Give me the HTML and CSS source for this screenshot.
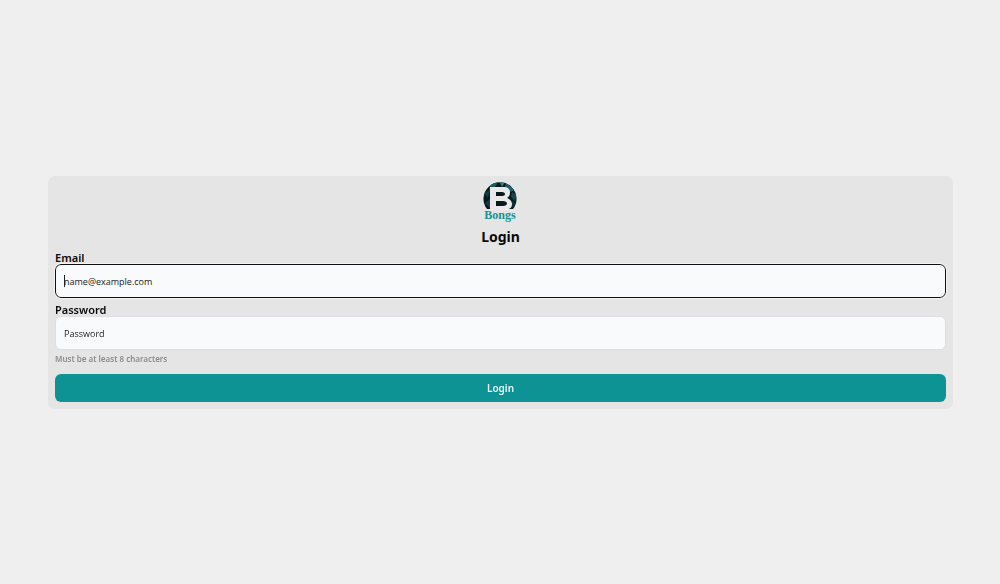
FILE: index.html
```html
<!DOCTYPE html>
<html lang="en">
<head>
<meta charset="utf-8">
<meta name="viewport" content="width=device-width, initial-scale=1">
<title>Login</title>
<link rel="stylesheet" href="styles.css">
</head>
<body class="page">
<main class="card">
  <svg class="logo" viewBox="0 0 34 42" role="img" aria-label="Bongs">
    <defs><clipPath id="disc"><path d="M4 28A16.500 16.500 0 1 1 30 28Z"/></clipPath></defs>
    <g clip-path="url(#disc)">
      <rect width="34" height="30" fill="#08191d"/>
      <path d="M8 3L15 0L13 5L6 9Z" fill="#175b5f"/>
      <path d="M16 0L22 1L19 6Z" fill="#327f80"/>
      <path d="M23 2L32 9L27 11L22 6Z" fill="#1d6468"/>
      <path d="M29 11L34 14L32 20L28 16Z" fill="#15474b"/>
      <path d="M1 12L7 9L5 17Z" fill="#103d42"/>
      <path d="M2 22L7 18L8 28Z" fill="#123e42"/>
      <path d="M29 20L33 22L27 29Z" fill="#0d3337"/>
    </g>
    <path fill="#e9e9e9" fill-rule="evenodd" d="M7 6H20C25 6 27 8 27 11.500C27 14 26 16 24 17C27 18 29 20 29 23C29 27 26 29 21 29H7ZM13 11V15H19C21 15 22 14 22 13C22 12 21 11 19 11ZM13 20V25H20C22.500 25 24 24 24 22.500C24 21 22.500 20 20 20Z"/>
    <text class="logo-name" x="17" y="38" text-anchor="middle">Bongs</text>
  </svg>
  <h1 class="title">Login</h1>
  <form class="form">
    <label class="label" for="email">Email</label>
    <input class="field" id="email" type="email" placeholder="name@example.com" autofocus>
    <label class="label label-next" for="password">Password</label>
    <input class="field" id="password" type="password" placeholder="Password" aria-describedby="hint">
    <p class="hint" id="hint">Must be at least 8 characters</p>
    <button class="submit" type="submit">Login</button>
  </form>
</main>
</body>
</html>
```

FILE: styles.css
```css
* {
  box-sizing: border-box;
}

.page {
  margin: 0;
  min-height: 100vh;
  padding: 0 47px 0 48px;
  display: flex;
  align-items: center;
  background: #efefef;
  color: #0a0a0a;
  font-family: "Noto Sans", "Open Sans", sans-serif;
}

.card {
  flex: 1;
  display: flex;
  flex-direction: column;
  align-items: center;
  padding: 5px 7px 7px;
  border-radius: 7px;
  background: #e5e5e5;
}

.logo {
  width: 34px;
  height: 42px;
  margin-right: 2px;
}

.logo-name {
  font: bold 12px "Liberation Serif", serif;
  fill: #159394;
}

.title {
  margin: 4px 0;
  font-size: 14px;
  line-height: 20px;
  font-weight: 700;
}

.form {
  width: 100%;
  display: flex;
  flex-direction: column;
}

.label {
  font-size: 11px;
  line-height: 13px;
  font-weight: 600;
}

.label-next {
  margin-top: 5px;
}

.field {
  width: 100%;
  height: 34px;
  padding: 2px 8px 0;
  border: 1px solid #dcdee1;
  border-radius: 6px;
  background: #f9fafc;
  color: #222222;
  font-family: "Open Sans", "Noto Sans", sans-serif;
  font-size: 9px;
}

.field::placeholder {
  color: #222222;
  opacity: 1;
}

.field:focus {
  border-color: #101010;
  outline: 1px solid #f4f4f4;
}

/* Steady caret while the focused field is empty */
.field:focus:placeholder-shown {
  caret-color: transparent;
  background-image: linear-gradient(#222222, #222222);
  background-position: 8px center;
  background-size: 1px 12px;
  background-repeat: no-repeat;
}

.hint {
  margin: 2px 0 9px;
  font-size: 8px;
  line-height: 13px;
  font-weight: 600;
  color: #8c8c8c;
}

.submit {
  height: 28px;
  padding: 1px 0 0;
  border: 0;
  border-radius: 6px;
  background: #0d9394;
  color: #eefafa;
  font-family: inherit;
  font-size: 10px;
  font-weight: 600;
}
```
